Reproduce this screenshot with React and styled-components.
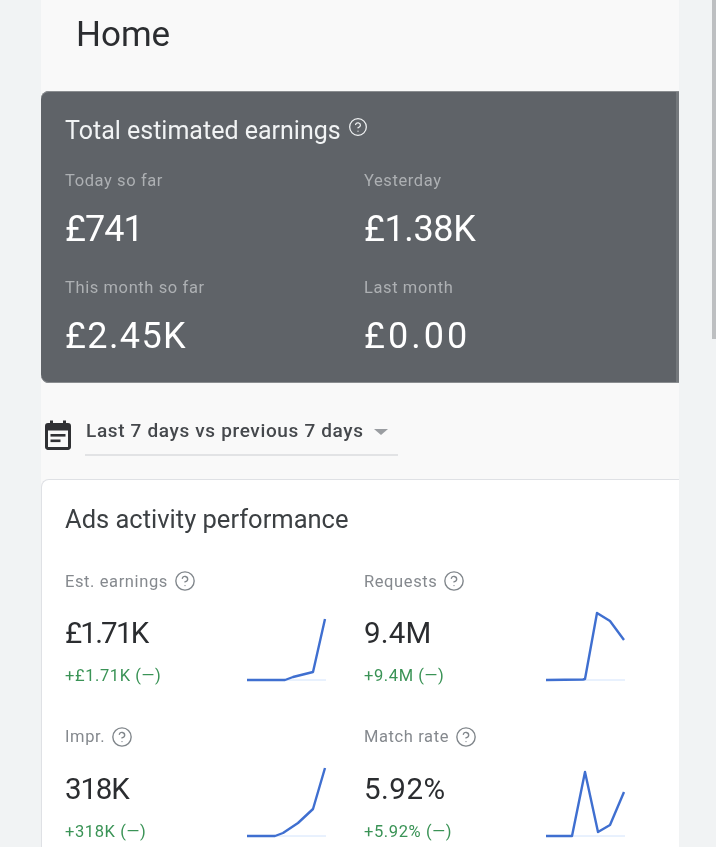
import React from 'react';
import styled, { createGlobalStyle } from 'styled-components';
import { CircleHelp } from 'lucide-react';

const Global = createGlobalStyle`
  html, body { margin: 0; padding: 0; height: 100%; overflow: hidden; background: #f1f3f4; }
  body { font-family: Roboto, "Liberation Sans", sans-serif; }
  * { box-sizing: border-box; }
`;

const Shell = styled.div`
  position: relative;
  height: 847px;
  padding: 0 37px 0 41px;
  overflow: hidden;
  background: #f1f3f4;
  filter: blur(0.6px);
`;
const Panel = styled.main`
  height: 847px;
  background: #f9f9f9;
  overflow: hidden;
`;
const Thumb = styled.div`
  position: absolute;
  top: 0;
  right: 0;
  width: 4px;
  height: 339px;
  background: #bdbfc1;
`;
const Title = styled.h1`
  margin: 0;
  height: 91px;
  padding: 15px 0 0 35px;
  font-size: 35px;
  line-height: 40px;
  font-weight: 400;
  color: #2b2d30;
`;
const Summary = styled.section`
  height: 292px;
  padding: 25px 0 0 24px;
  background: #5f6368;
  border-radius: 8px 0 0 8px;
  box-shadow: inset 0 1px 0 #8a8d90, inset 0 -1px 0 #8a8d90, inset -3px 0 0 #74787c;
  color: #fff;
`;
const SummaryHead = styled.div`
  display: flex;
  align-items: flex-start;
  gap: 7px;
  height: 36px;
  font-size: 25px;
  line-height: 30px;
  color: #f1f3f4;
  svg { margin-top: 1px; }
`;
const SummaryGrid = styled.div`
  display: grid;
  grid-template-columns: 299px 1fr;
  grid-auto-rows: 106.5px;
  margin-top: 19px;
`;
const StatLabel = styled.div`
  font-size: 16.5px;
  line-height: 20px;
  letter-spacing: 0.6px;
  color: #adb0b3;
`;
const StatValue = styled.div`
  margin-top: 17px;
  font-size: 36px;
  line-height: 42px;
  color: #fff;
  letter-spacing: ${(p) => p.$tracking}px;
`;
const RangeRow = styled.div`
  display: flex;
  height: 96px;
  padding: 30px 0 0 4px;
  svg { flex: none; margin-top: 6px; }
`;
const RangeSelect = styled.div`
  display: flex;
  align-items: flex-start;
  width: 313px;
  height: 43px;
  margin-left: 14px;
  padding: 7px 0 0 1px;
  border-bottom: 2px solid #e2e3e5;
  font-size: 19px;
  line-height: 22px;
  font-weight: 500;
  letter-spacing: 0.65px;
  color: #45484c;
`;
const Caret = styled.span`
  width: 0;
  height: 0;
  margin: 9px 0 0 10px;
  border-left: 7px solid transparent;
  border-right: 7px solid transparent;
  border-top: 6px solid #9a9da1;
`;
const ActivityCard = styled.section`
  height: 400px;
  padding: 24px 0 0 23px;
  background: #fff;
  border: solid #dfe1e5;
  border-width: 1px 0 0 1px;
  border-radius: 8px 0 0 0;
`;
const ActivityTitle = styled.h2`
  margin: 0;
  height: 30px;
  font-size: 25.5px;
  line-height: 30px;
  font-weight: 400;
  color: #3c4043;
`;
const MetricGrid = styled.div`
  display: grid;
  grid-template-columns: 299px 1fr;
  grid-auto-rows: 155.5px;
  margin-top: 37px;
`;
const Metric = styled.article`
  display: flex;
  justify-content: space-between;
  align-items: flex-start;
  width: 262px;
`;
const MetricLabel = styled.div`
  display: flex;
  align-items: center;
  gap: 6px;
  height: 20px;
  font-size: 16.5px;
  letter-spacing: 0.6px;
  color: #85898e;
`;
const MetricValue = styled.div`
  margin-top: 24px;
  font-size: 29.5px;
  line-height: 36px;
  color: #2b2d30;
  letter-spacing: ${(p) => p.$tracking}px;
`;
const MetricDelta = styled.div`
  margin-top: 15px;
  font-size: 16.5px;
  line-height: 20px;
  letter-spacing: 0.6px;
  color: #3a9356;
`;
const Spark = styled.svg`
  display: block;
  flex: none;
  width: 80px;
  height: 72px;
  margin-top: 39px;
`;

const Help = ({ size = 22, color = '#80868b' }) => (
  <CircleHelp size={size} color={color} strokeWidth={1.5} />
);

const CalendarIcon = () => (
  <svg width="26" height="31" viewBox="0 0 26 31">
    <path d="M3 5.5h20a1.5 1.5 0 0 1 1.5 1.5v21a1.5 1.5 0 0 1-1.5 1.5h-20a1.5 1.5 0 0 1-1.5-1.5v-21a1.5 1.5 0 0 1 1.5-1.5z" fill="none" stroke="#303134" strokeWidth="3" />
    <rect x="1.5" y="5" width="23" height="6.5" fill="#303134" />
    <rect x="5" y="1.5" width="3" height="5" fill="#303134" />
    <rect x="18" y="1.5" width="3" height="5" fill="#303134" />
    <rect x="5.5" y="15" width="15" height="2.6" fill="#303134" />
    <rect x="5.5" y="20.5" width="10" height="2.6" fill="#303134" />
  </svg>
);

const Sparkline = ({ points }) => (
  <Spark viewBox="0 0 80 72">
    <line x1="0" y1="70" x2="79" y2="70" stroke="#d2e3fc" strokeWidth="1" />
    <polyline points={points} fill="none" stroke="#3f6fd0" strokeWidth="2.4" strokeLinejoin="round" />
  </Spark>
);

const stats = [
  { label: 'Today so far', value: '£741', tracking: -1 },
  { label: 'Yesterday', value: '£1.38K', tracking: -0.4 },
  { label: 'This month so far', value: '£2.45K', tracking: 1.4 },
  { label: 'Last month', value: '£0.00', tracking: 3 },
];

const metrics = [
  { label: 'Est. earnings', value: '£1.71K', tracking: -1.8, delta: '+£1.71K (—)', points: '0,70 38,70 46,67 66,62 78,9' },
  { label: 'Requests', value: '9.4M', tracking: 0.2, delta: '+9.4M (—)', points: '0,70 37,69.5 39,69 51,3 64,11 78,30' },
  { label: 'Impr.', value: '318K', tracking: -1.2, delta: '+318K (—)', points: '0,70 28,70 36,67 51,57 66,43 78,2' },
  { label: 'Match rate', value: '5.92%', tracking: 0.5, delta: '+5.92% (—)', points: '0,70 26,70 39,6 52,66 64,59 78,26' },
];

export default function App() {
  return (
    <>
      <Global />
      <Shell>
        <Panel>
          <Title>Home</Title>
          <Summary>
            <SummaryHead>
              Total estimated earnings
              <Help size={20} color="#f1f3f4" />
            </SummaryHead>
            <SummaryGrid>
              {stats.map((s) => (
                <div key={s.label}>
                  <StatLabel>{s.label}</StatLabel>
                  <StatValue $tracking={s.tracking}>{s.value}</StatValue>
                </div>
              ))}
            </SummaryGrid>
          </Summary>
          <RangeRow>
            <CalendarIcon />
            <RangeSelect>
              Last 7 days vs previous 7 days
              <Caret />
            </RangeSelect>
          </RangeRow>
          <ActivityCard>
            <ActivityTitle>Ads activity performance</ActivityTitle>
            <MetricGrid>
              {metrics.map((m) => (
                <Metric key={m.label}>
                  <div>
                    <MetricLabel>
                      {m.label}
                      <Help />
                    </MetricLabel>
                    <MetricValue $tracking={m.tracking}>{m.value}</MetricValue>
                    <MetricDelta>{m.delta}</MetricDelta>
                  </div>
                  <Sparkline points={m.points} />
                </Metric>
              ))}
            </MetricGrid>
          </ActivityCard>
        </Panel>
        <Thumb />
      </Shell>
    </>
  );
}
